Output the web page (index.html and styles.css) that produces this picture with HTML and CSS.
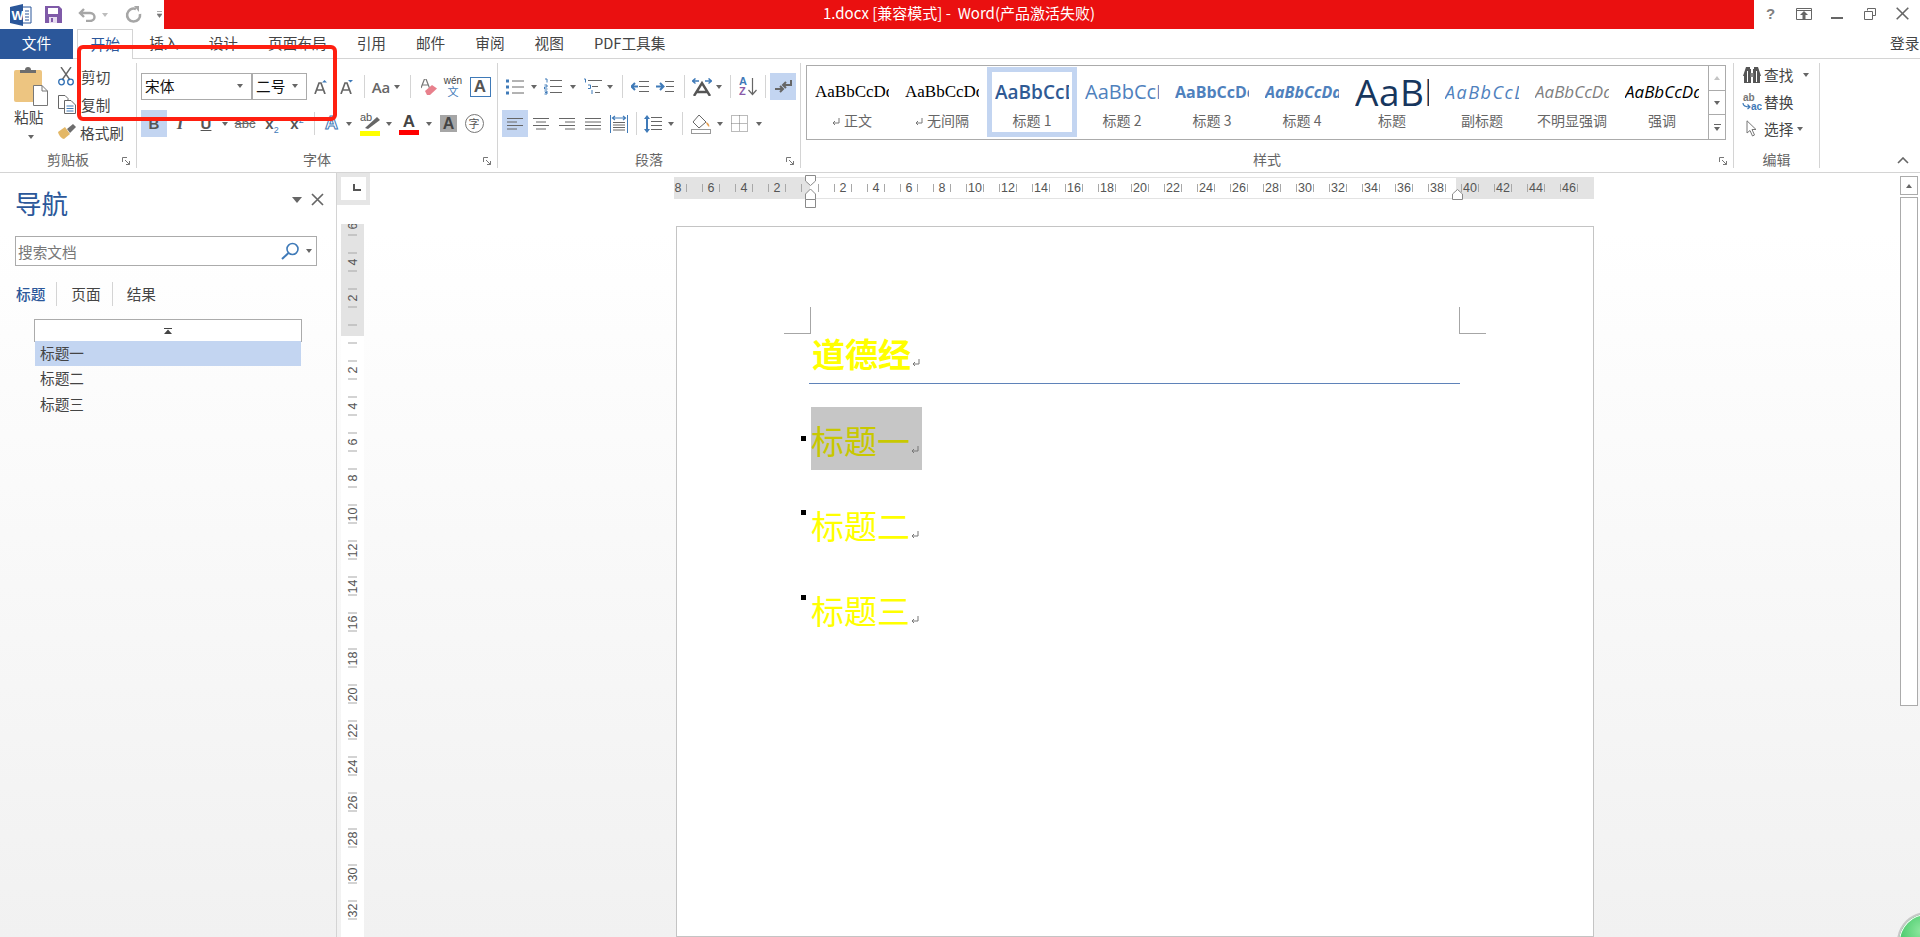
FILE: index.html
```html
<!DOCTYPE html>
<html lang="zh-CN">
<head>
  <meta charset="UTF-8">
  <title>1.docx [兼容模式] - Word</title>
  <link rel="stylesheet" href="styles.css">
</head>
<body>

  <!-- barra de título -->
  <header class="titlebar">
    <div class="quick">
      <svg class="word-logo" width="22" height="24" viewBox="0 0 22 24">
        <path d="M0 4 L13 1 V23 L0 20 Z" fill="#2b579a"/>
        <path d="M13 4 H21 V20 H13" fill="#fff" stroke="#2b579a"/>
        <path d="M15 8 H19 M15 11 H19 M15 14 H19 M15 17 H19" stroke="#2b579a"/>
        <text x="1.5" y="16.5" class="word-w">W</text>
      </svg>
      <svg class="save" width="17" height="17" viewBox="0 0 17 17">
        <path d="M0 0 H14 L17 3 V17 H0 Z" fill="#7f5aa8"/>
        <rect x="3" y="2" width="10" height="6" fill="#fff"/>
        <rect x="4" y="11" width="8" height="6" fill="#e6dcf0"/>
        <rect x="6" y="12" width="2" height="4" fill="#7f5aa8"/>
      </svg>
      <svg class="undo" width="19" height="14" viewBox="0 0 19 14">
        <path d="M2 5 H12 C18 5 18 13 12 13 H8 M6 1 L2 5 L6 9" fill="none" stroke="#a6a6a6" stroke-width="2.4"/>
      </svg>
      <i class="caret undo-caret"></i>
      <svg class="redo" width="17" height="17" viewBox="0 0 17 17">
        <path d="M11 3 A6.5 6.5 0 1 0 15 8" fill="none" stroke="#a6a6a6" stroke-width="2.6"/>
        <path d="M9 0 H14 V6 Z" fill="#a6a6a6"/>
      </svg>
      <svg class="customize" width="5" height="7" viewBox="0 0 5 7">
        <path d="M0 .5 H5 M0 3 H5 L2.5 6.5 Z" fill="#777" stroke="#777" stroke-width=".6"/>
      </svg>
    </div>
    <div class="title-red">1.docx [兼容模式] -&nbsp; Word(产品激活失败)</div>
    <div class="win-btns">
      <span class="win-btn help">?</span>
      <span class="win-btn"><svg width="16" height="12" viewBox="0 0 16 12"><path d="M.5 .5 H15.5 V11.5 H.5 Z M.5 2.5 H15.5" fill="none" stroke="#666"/><path d="M8 3 L12 7 H9.5 V11 H6.5 V7 H4 Z" fill="#666"/></svg></span>
      <span class="win-btn"><svg width="12" height="12" viewBox="0 0 12 12"><path d="M0 10 H12" stroke="#666" stroke-width="2"/></svg></span>
      <span class="win-btn"><svg width="12" height="12" viewBox="0 0 12 12"><path d="M3.5 2.5 V.5 H11.5 V7.5 H8.5 M.5 3.5 H8.5 V11.5 H.5 Z" fill="none" stroke="#666"/></svg></span>
      <span class="win-btn"><svg width="13" height="13" viewBox="0 0 13 13"><path d="M.7 .7 L12.3 12.3 M12.3 .7 L.7 12.3" stroke="#666" stroke-width="1.6"/></svg></span>
    </div>
  </header>

  <!-- pestañas -->
  <nav class="tabs">
    <div class="tab-file">文件</div>
    <div class="tab tab-active">开始</div>
    <div class="tab">插入</div>
    <div class="tab">设计</div>
    <div class="tab">页面布局</div>
    <div class="tab">引用</div>
    <div class="tab">邮件</div>
    <div class="tab">审阅</div>
    <div class="tab">视图</div>
    <div class="tab">PDF工具集</div>
    <div class="login">登录</div>
  </nav>

  <!-- cinta de opciones -->
  <section class="ribbon">

    <div class="group group-clipboard">
      <div class="clip-body">
        <div class="paste">
          <svg width="35" height="39" viewBox="0 0 35 39">
            <rect x="0" y="3" width="28" height="32" rx="2" fill="#edc581"/>
            <path d="M6 6 V3 H11 A3 3 0 0 1 17 3 H22 V6 Z" fill="#6d6d6d"/>
            <path d="M19.5 18.5 H28 L33.5 24 V38.5 H19.5 Z" fill="#fff" stroke="#777"/>
            <path d="M28 18.5 V24 H33.5" fill="none" stroke="#777"/>
          </svg>
          <span class="paste-label">粘贴</span>
          <i class="caret"></i>
        </div>
        <div class="clip-list">
          <div class="clip-row">
            <svg width="16" height="19" viewBox="0 0 16 19">
              <path d="M3 0 L12 13 M13 0 L4 13" stroke="#666" stroke-width="1.4"/>
              <circle cx="3.5" cy="15" r="2.8" fill="none" stroke="#2f6fb4" stroke-width="1.3"/>
              <circle cx="12.5" cy="15" r="2.8" fill="none" stroke="#2f6fb4" stroke-width="1.3"/>
            </svg>
            <span>剪切</span>
          </div>
          <div class="clip-row">
            <svg width="18" height="19" viewBox="0 0 18 19">
              <path d="M.5 .5 H7 L10 3.5 V13.5 H.5 Z" fill="#fff" stroke="#666"/>
              <path d="M6.5 5.5 H13 L17.5 10 V18.5 H6.5 Z" fill="#fff" stroke="#666"/>
              <path d="M8.5 11 H15.5 M8.5 13.5 H15.5 M8.5 16 H15.5" stroke="#3f7ab8"/>
            </svg>
            <span>复制</span>
          </div>
          <div class="clip-row">
            <svg width="18" height="16" viewBox="0 0 18 16">
              <path d="M0 8 L7 3 L12 10 L6 15 C4 15 1 12 0 8 Z" fill="#e3b766"/>
              <path d="M9 5 L15 0 L18 3 L12 9 Z" fill="#6d6d6d"/>
            </svg>
            <span class="clip-brush">格式刷</span>
          </div>
        </div>
      </div>
      <div class="group-label">剪贴板</div>
      <svg class="launcher" width="8" height="8" viewBox="0 0 8 8"><path d="M.5 5 V.5 H5 M3 3 L7.5 7.5 M7.5 4 V7.5 H4" fill="none" stroke="#777"/></svg>
    </div>

    <div class="group group-font">
      <div class="tool-rows">
        <div class="tool-row">
          <div class="combo combo-font"><span>宋体</span><i class="caret"></i></div>
          <div class="combo combo-size"><span>二号</span><i class="caret"></i></div>
          <div class="tool w27">
            <svg width="13" height="14" viewBox="0 0 13 14"><path d="M1 14 L5 3 H7 L11 14 M3 10 H9" fill="none" stroke="#666" stroke-width="1.7"/><path d="M8 2.5 L10.5 0 L13 2.5 Z" fill="#3f7ab8"/></svg>
          </div>
          <div class="tool w25">
            <svg width="13" height="14" viewBox="0 0 13 14"><path d="M1 14 L5 3 H7 L11 14 M3 10 H9" fill="none" stroke="#666" stroke-width="1.7"/><path d="M8 0 H13 L10.5 2.5 Z" fill="#3f7ab8"/></svg>
          </div>
          <div class="sep w9"></div>
          <div class="tool w36 tool-aa"><span class="aa">Aa</span><i class="caret"></i></div>
          <div class="sep w12"></div>
          <div class="tool w26">
            <svg width="16" height="16" viewBox="0 0 16 16"><path d="M0 9 L3.5 0 H5 L8.5 9 M1.5 6 H7" fill="none" stroke="#777" stroke-width="1.2"/><path d="M4 12 L11 6 L16 9.5 L9 16 H6 Z" fill="#e8808c"/></svg>
          </div>
          <div class="tool w22 wen"><span class="wen-top">wén</span><span class="wen-bot">文</span></div>
          <div class="tool w32"><span class="a-box">A</span></div>
        </div>
        <div class="tool-row">
          <div class="tool w26 tool-on fmt">B</div>
          <div class="tool w26 fmt fmt-i">I</div>
          <div class="tool w26 fmt fmt-u">U</div>
          <div class="tool w12"><i class="caret"></i></div>
          <div class="tool w28 fmt-abc">abc</div>
          <div class="tool w26 fmt-x"><span>x<sub>2</sub></span></div>
          <div class="tool w24 fmt-x"><span>x<sup>2</sup></span></div>
          <div class="sep w10"></div>
          <div class="tool w25"><span class="a-effect">A</span></div>
          <div class="tool w10"><i class="caret"></i></div>
          <div class="tool w31">
            <svg width="20" height="24" viewBox="0 0 20 24"><text x="0" y="9" class="ab">ab</text><path d="M5 16 L17 5 L20 8 L8 17 Z" fill="#666"/><rect x="0" y="19" width="20" height="5" fill="#ffff00"/></svg>
          </div>
          <div class="tool w8"><i class="caret"></i></div>
          <div class="tool w32 a-color">A</div>
          <div class="tool w8"><i class="caret"></i></div>
          <div class="tool w31"><span class="a-shade">A</span></div>
          <div class="tool w20"><span class="a-ring">字</span></div>
        </div>
      </div>
      <div class="group-label">字体</div>
      <svg class="launcher" width="8" height="8" viewBox="0 0 8 8"><path d="M.5 5 V.5 H5 M3 3 L7.5 7.5 M7.5 4 V7.5 H4" fill="none" stroke="#777"/></svg>
    </div>

    <div class="group group-para">
      <div class="tool-rows">
        <div class="tool-row">
          <div class="tool w26">
            <svg width="18" height="16" viewBox="0 0 18 16"><path d="M6 2 H18 M6 8 H18 M6 14 H18" stroke="#666"/><path d="M0 2 H3 M0 8 H3 M0 14 H3" stroke="#3f7ab8" stroke-width="3"/></svg>
          </div>
          <div class="tool w12"><i class="caret"></i></div>
          <div class="tool w26">
            <svg width="18" height="17" viewBox="0 0 18 17"><path d="M6 2.5 H18 M6 8.5 H18 M6 14.5 H18" stroke="#666"/><path d="M1 1 H3 V4.5 M.5 7 H3 V9 H.5 V11 H3.5 M.5 13 H3 V16 H.5 M1 14.5 H3" fill="none" stroke="#3f7ab8"/></svg>
          </div>
          <div class="tool w14"><i class="caret"></i></div>
          <div class="tool w24">
            <svg width="19" height="17" viewBox="0 0 19 17"><path d="M5 2.5 H19 M9 8.5 H15 M12 14.5 H17" stroke="#666"/><path d="M1 1 H2.5 V4.5 M5 7 H7.5 V10.5 H5 M9 12 V16" fill="none" stroke="#3f7ab8"/></svg>
          </div>
          <div class="tool w12"><i class="caret"></i></div>
          <div class="sep w12"></div>
          <div class="tool w24">
            <svg width="18" height="11" viewBox="0 0 18 11"><path d="M8 .5 H18 M8 5.5 H18 M8 10.5 H18" stroke="#666"/><path d="M7 5.5 H1 M4 2 L.5 5.5 L4 9" fill="none" stroke="#3f7ab8" stroke-width="2"/></svg>
          </div>
          <div class="tool w26">
            <svg width="18" height="11" viewBox="0 0 18 11"><path d="M9 .5 H18 M10 5.5 H18 M9 10.5 H18" stroke="#666"/><path d="M0 5.5 H7 M4 2 L7.5 5.5 L4 9" fill="none" stroke="#3f7ab8" stroke-width="2"/></svg>
          </div>
          <div class="sep w12"></div>
          <div class="tool w24">
            <svg width="20" height="18" viewBox="0 0 20 18"><path d="M2 18 L10 5 L18 18 M5 14 H15" fill="none" stroke="#555" stroke-width="2.4"/><path d="M7 3 H1 M3.5 .5 L.5 3 L3.5 5.5 M13 3 H19 M16.5 .5 L19.5 3 L16.5 5.5" fill="none" stroke="#3f7ab8" stroke-width="1.5"/></svg>
          </div>
          <div class="tool w10"><i class="caret"></i></div>
          <div class="sep w12"></div>
          <div class="tool w24">
            <svg width="18" height="19" viewBox="0 0 18 19"><text x="0" y="8" class="az az-a">A</text><text x="0" y="18" class="az az-z">Z</text><path d="M13.5 1 V17 M9.5 13 L13.5 17.5 L17.5 13" fill="none" stroke="#666" stroke-width="1.2"/></svg>
          </div>
          <div class="sep w10"></div>
          <div class="tool w26 tool-on">
            <svg width="17" height="14" viewBox="0 0 17 14"><path d="M16 0 V5 H8 M11 2 L8 5 L11 8" fill="none" stroke="#666" stroke-width="2"/><path d="M0 9 H8 M5 6 L8 9 L5 12" fill="none" stroke="#666" stroke-width="2"/></svg>
          </div>
        </div>
        <div class="tool-row">
          <div class="tool w26 tool-on">
            <svg width="16" height="12" viewBox="0 0 16 12"><path d="M0 .5 H16 M0 4 H10 M0 7.5 H16 M0 11 H10" stroke="#666"/></svg>
          </div>
          <div class="tool w26">
            <svg width="16" height="12" viewBox="0 0 16 12"><path d="M0 .5 H16 M3 4 H13 M0 7.5 H16 M3 11 H13" stroke="#666"/></svg>
          </div>
          <div class="tool w26">
            <svg width="16" height="12" viewBox="0 0 16 12"><path d="M0 .5 H16 M6 4 H16 M0 7.5 H16 M6 11 H16" stroke="#666"/></svg>
          </div>
          <div class="tool w26">
            <svg width="16" height="12" viewBox="0 0 16 12"><path d="M0 .5 H16 M0 4 H16 M0 7.5 H16 M0 11 H16" stroke="#666"/></svg>
          </div>
          <div class="tool w26">
            <svg width="18" height="18" viewBox="0 0 18 18"><path d="M.5 0 V18 M17.5 0 V18" stroke="#3f7ab8"/><path d="M3 3 H15 M5 1 L2.5 3 L5 5 M13 1 L15.5 3 L13 5" fill="none" stroke="#3f7ab8" stroke-width="1.2"/><path d="M3 7.5 H15 M3 10 H15 M3 12.5 H15 M3 15 H15" stroke="#666"/></svg>
          </div>
          <div class="sep w8"></div>
          <div class="tool w26">
            <svg width="18" height="18" viewBox="0 0 18 18"><path d="M7 2.5 H18 M7 6.5 H18 M7 10.5 H18 M7 14.5 H18" stroke="#666"/><path d="M3 3 V15" stroke="#3f7ab8" stroke-width="2"/><path d="M0 4 L3 0 L6 4 Z M0 14 H6 L3 18 Z" fill="#3f7ab8"/></svg>
          </div>
          <div class="tool w10"><i class="caret"></i></div>
          <div class="sep w12"></div>
          <div class="tool w26">
            <svg width="20" height="20" viewBox="0 0 20 20"><path d="M8 1 L15 8 L8 14 L2 8 Z" fill="#fff" stroke="#666"/><path d="M15 8 C18 9 19 12 18 13 C17 12 15 10 15 8 Z" fill="#e8a050"/><rect x=".5" y="15.5" width="19" height="4" fill="#fff" stroke="#999"/></svg>
          </div>
          <div class="tool w12"><i class="caret"></i></div>
          <div class="tool w26">
            <svg width="17" height="17" viewBox="0 0 17 17"><path d="M.5 .5 H16.5 V16.5 H.5 Z M8.5 .5 V16.5 M.5 8.5 H16.5" fill="none" stroke="#777" stroke-dasharray="1 1"/></svg>
          </div>
          <div class="tool w14"><i class="caret"></i></div>
        </div>
      </div>
      <div class="group-label">段落</div>
      <svg class="launcher" width="8" height="8" viewBox="0 0 8 8"><path d="M.5 5 V.5 H5 M3 3 L7.5 7.5 M7.5 4 V7.5 H4" fill="none" stroke="#777"/></svg>
    </div>

    <div class="group group-styles">
      <div class="gallery">
        <div class="style-item">
          <div class="preview pv-normal">AaBbCcDd</div>
          <div class="style-name"><svg class="para-mark" width="8" height="8" viewBox="0 0 8 8"><path d="M7 0 V5 H1 M3 3 L1 5 L3 7" fill="none" stroke="#777"/></svg> 正文</div>
        </div>
        <div class="style-item">
          <div class="preview pv-normal">AaBbCcDd</div>
          <div class="style-name"><svg class="para-mark" width="8" height="8" viewBox="0 0 8 8"><path d="M7 0 V5 H1 M3 3 L1 5 L3 7" fill="none" stroke="#777"/></svg> 无间隔</div>
        </div>
        <div class="style-item style-on">
          <div class="preview pv-h1">AaBbCcDd</div>
          <div class="style-name">标题 1</div>
        </div>
        <div class="style-item">
          <div class="preview pv-h2">AaBbCcDd</div>
          <div class="style-name">标题 2</div>
        </div>
        <div class="style-item">
          <div class="preview pv-h3">AaBbCcDd</div>
          <div class="style-name">标题 3</div>
        </div>
        <div class="style-item">
          <div class="preview pv-h4">AaBbCcDd</div>
          <div class="style-name">标题 4</div>
        </div>
        <div class="style-item">
          <div class="preview pv-title">AaBbCcDd</div>
          <div class="style-name">标题</div>
        </div>
        <div class="style-item">
          <div class="preview pv-sub">AaBbCcDd</div>
          <div class="style-name">副标题</div>
        </div>
        <div class="style-item">
          <div class="preview pv-subtle">AaBbCcDd</div>
          <div class="style-name">不明显强调</div>
        </div>
        <div class="style-item">
          <div class="preview pv-em">AaBbCcDd</div>
          <div class="style-name">强调</div>
        </div>
        <div class="gallery-scroll">
          <div class="gs-btn"><i class="caret caret-up caret-pale"></i></div>
          <div class="gs-btn"><i class="caret"></i></div>
          <div class="gs-btn gs-more"><i class="gs-bar"></i><i class="caret"></i></div>
        </div>
      </div>
      <div class="group-label">样式</div>
      <svg class="launcher" width="8" height="8" viewBox="0 0 8 8"><path d="M.5 5 V.5 H5 M3 3 L7.5 7.5 M7.5 4 V7.5 H4" fill="none" stroke="#777"/></svg>
    </div>

    <div class="group group-edit">
      <div class="edit-list">
        <div class="edit-row">
          <svg class="edit-icon" width="18" height="16" viewBox="0 0 18 16"><path d="M3 0 H7 V2 H8 V16 H1 V9 H0 Z M15 0 H11 V2 H10 V16 H17 V9 H18 Z" fill="#555"/><path d="M7.5 6 H10.5 V10 H7.5 Z" fill="#888"/><path d="M4.5 4 V15 M13.5 4 V15" stroke="#fff"/></svg>
          <span>查找</span><i class="caret caret-find"></i>
        </div>
        <div class="edit-row">
          <svg class="edit-icon" width="20" height="18" viewBox="0 0 20 18"><text x="1" y="8" class="ab-rep ab-top">ab</text><text x="9" y="17" class="ab-rep">ac</text><path d="M1 10 C1 13 3 14 8 14 M5.5 11.5 L8 14 L5.5 16" fill="none" stroke="#3f7ab8" stroke-width="1.2"/></svg>
          <span>替换</span>
        </div>
        <div class="edit-row">
          <svg class="edit-icon" width="20" height="17" viewBox="0 0 12 17"><path d="M1 .8 V13 L4 10.5 L6.5 16 L8.5 15 L6 9.5 H10 Z" fill="#fff" stroke="#777"/></svg>
          <span>选择</span><i class="caret"></i>
        </div>
      </div>
      <div class="group-label">编辑</div>
    </div>

    <svg class="collapse" width="12" height="7" viewBox="0 0 12 7"><path d="M1 6 L6 1 L11 6" fill="none" stroke="#666" stroke-width="1.6"/></svg>
  </section>

  <main class="workspace">

    <!-- panel de navegación -->
    <aside class="nav-pane">
      <div class="nav-head">
        <h2>导航</h2>
        <i class="nav-caret"></i>
        <svg width="13" height="13" viewBox="0 0 13 13"><path d="M1 1 L12 12 M12 1 L1 12" stroke="#666" stroke-width="1.7"/></svg>
      </div>
      <div class="nav-search">
        <span>搜索文档</span>
        <svg width="19" height="18" viewBox="0 0 19 18"><circle cx="11.5" cy="7" r="5.5" fill="none" stroke="#3f7ab8" stroke-width="1.6"/><path d="M7.5 11 L1 17" stroke="#3f7ab8" stroke-width="2"/></svg>
        <i class="caret"></i>
      </div>
      <div class="nav-tabs">
        <span class="nav-tab nav-tab-on">标题</span>
        <span class="nav-tab">页面</span>
        <span class="nav-tab">结果</span>
      </div>
      <div class="nav-tree">
        <div class="tree-top">
          <svg width="8" height="6" viewBox="0 0 8 6"><path d="M0 0 H8 V1 H0 Z M4 1.5 L8 6 H0 Z" fill="#444"/></svg>
        </div>
        <div class="tree-item tree-on">标题一</div>
        <div class="tree-item">标题二</div>
        <div class="tree-item">标题三</div>
      </div>
    </aside>

    <!-- área del documento -->
    <div class="doc">
      <div class="doc-top">
        <div class="ruler-corner"><span><i></i></span></div>
        <div class="hruler">
          <div class="hruler-track">
            <span class="hcell hcell-first"><b>8</b></span>
            <span class="hcell"><b>6</b></span>
            <span class="hcell"><b>4</b></span>
            <span class="hcell"><b>2</b></span>
            <span class="hcell"><b></b></span>
            <span class="hcell"><b>2</b></span>
            <span class="hcell"><b>4</b></span>
            <span class="hcell"><b>6</b></span>
            <span class="hcell"><b>8</b></span>
            <span class="hcell"><b>10</b></span>
            <span class="hcell"><b>12</b></span>
            <span class="hcell"><b>14</b></span>
            <span class="hcell"><b>16</b></span>
            <span class="hcell"><b>18</b></span>
            <span class="hcell"><b>20</b></span>
            <span class="hcell"><b>22</b></span>
            <span class="hcell"><b>24</b></span>
            <span class="hcell"><b>26</b></span>
            <span class="hcell"><b>28</b></span>
            <span class="hcell"><b>30</b></span>
            <span class="hcell"><b>32</b></span>
            <span class="hcell"><b>34</b></span>
            <span class="hcell"><b>36</b></span>
            <span class="hcell"><b>38</b></span>
            <span class="hcell"><b>40</b></span>
            <span class="hcell"><b>42</b></span>
            <span class="hcell"><b>44</b></span>
            <span class="hcell"><b>46</b></span>
          </div>
          <svg class="marker-left" width="13" height="33" viewBox="0 0 13 33">
            <path d="M1.5 .5 H11.5 V6 L6.5 10.5 L1.5 6 Z" fill="#fff" stroke="#8a8a8a"/>
            <path d="M6.5 14 L11.5 19 V24.5 H1.5 V19 Z" fill="#fff" stroke="#8a8a8a"/>
            <path d="M1.5 24.5 H11.5 V32.5 H1.5 Z" fill="#fff" stroke="#8a8a8a"/>
          </svg>
          <svg class="marker-right" width="13" height="11" viewBox="0 0 13 11">
            <path d="M6.5 .5 L11.5 5 V10.5 H1.5 V5 Z" fill="#fff" stroke="#8a8a8a"/>
          </svg>
        </div>
      </div>
      <div class="doc-body">
        <div class="vruler">
          <span class="vcell vcell-first"><b>6</b></span>
          <span class="vcell"><b>4</b></span>
          <span class="vcell"><b>2</b></span>
          <span class="vcell"><b></b></span>
          <span class="vcell"><b>2</b></span>
          <span class="vcell"><b>4</b></span>
          <span class="vcell"><b>6</b></span>
          <span class="vcell"><b>8</b></span>
          <span class="vcell"><b>10</b></span>
          <span class="vcell"><b>12</b></span>
          <span class="vcell"><b>14</b></span>
          <span class="vcell"><b>16</b></span>
          <span class="vcell"><b>18</b></span>
          <span class="vcell"><b>20</b></span>
          <span class="vcell"><b>22</b></span>
          <span class="vcell"><b>24</b></span>
          <span class="vcell"><b>26</b></span>
          <span class="vcell"><b>28</b></span>
          <span class="vcell"><b>30</b></span>
          <span class="vcell"><b>32</b></span>
        </div>
        <article class="page">
          <i class="crop crop-left"></i>
          <i class="crop crop-right"></i>
          <h1 class="doc-title">道德经<svg class="doc-mark" width="8" height="8" viewBox="0 0 8 8"><path d="M7 0 V5 H1 M3 3 L1 5 L3 7" fill="none" stroke="#777"/></svg></h1>
          <div class="doc-list">
            <div class="doc-item">
              <i class="bullet"></i>
              <span class="doc-text doc-selected">标题一<svg class="doc-mark" width="8" height="8" viewBox="0 0 8 8"><path d="M7 0 V5 H1 M3 3 L1 5 L3 7" fill="none" stroke="#777"/></svg></span>
            </div>
            <div class="doc-item">
              <i class="bullet"></i>
              <span class="doc-text">标题二<svg class="doc-mark" width="8" height="8" viewBox="0 0 8 8"><path d="M7 0 V5 H1 M3 3 L1 5 L3 7" fill="none" stroke="#777"/></svg></span>
            </div>
            <div class="doc-item">
              <i class="bullet"></i>
              <span class="doc-text">标题三<svg class="doc-mark" width="8" height="8" viewBox="0 0 8 8"><path d="M7 0 V5 H1 M3 3 L1 5 L3 7" fill="none" stroke="#777"/></svg></span>
            </div>
          </div>
        </article>
      </div>
    </div>

    <div class="scrollbar">
      <div class="scroll-up"><i class="caret caret-up"></i></div>
      <div class="scroll-thumb"></div>
    </div>
  </main>

  <!-- marca roja de la captura y botón flotante -->
  <div class="annotation"></div>
  <div class="float-ball"></div>

</body>
</html>
```

FILE: styles.css
```css
* {
  box-sizing: border-box;
}

html, body {
  height: 100%;
}

body {
  margin: 0;
  overflow: hidden;
  display: flex;
  flex-direction: column;
  position: relative;
  background: #fff;
  color: #444;
  font-family: "Noto Sans CJK SC", "Liberation Sans", sans-serif;
  font-size: 14.67px;
}

/* generic small triangle */
.caret {
  display: inline-block;
  width: 0;
  height: 0;
  border-left: 3.5px solid transparent;
  border-right: 3.5px solid transparent;
  border-top: 4px solid #666;
}

.caret-up {
  border-top: 0;
  border-bottom: 4px solid #666;
}

.caret-pale {
  border-bottom-color: #c4c4c4;
}

/* title bar */
.titlebar {
  display: flex;
  height: 29px;
  flex: none;
}

.quick {
  width: 164px;
  flex: none;
  display: flex;
  align-items: center;
  padding-left: 10px;
}

.word-w {
  font: bold 13px "Liberation Sans", sans-serif;
  fill: #fff;
}

.save {
  margin-left: 13px;
}

.undo {
  margin-left: 16px;
}

.undo-caret {
  margin-left: 5px;
  border-top-color: #bdbdbd;
}

.redo {
  margin-left: 17px;
}

.customize {
  margin-left: 15px;
}

.title-red {
  flex: 1;
  background: #ea1010;
  color: #fff;
  text-align: center;
  font-size: 15px;
  line-height: 25px;
}

.win-btns {
  width: 166px;
  flex: none;
  display: flex;
  align-items: center;
  padding-bottom: 2px;
}

.win-btn {
  width: 33px;
  display: flex;
  justify-content: center;
}

.help {
  font: bold 15px "Liberation Sans", sans-serif;
  color: #808080;
}

/* tabs */
.tabs {
  display: flex;
  height: 30px;
  flex: none;
  border-bottom: 1px solid #d4d4d4;
}

.tab-file {
  width: 73px;
  height: 30px;
  background: #2b579a;
  color: #fff;
  text-align: center;
  line-height: 28px;
  margin-right: 4px;
}

.tab {
  padding: 0 15px;
  line-height: 27px;
  color: #444;
}

.tab-active {
  height: 30px;
  padding: 0 12.5px;
  margin-right: 1px;
  color: #2b579a;
  background: #fff;
  border: 1px solid #d4d4d4;
  border-bottom: 0;
}

.login {
  margin-left: auto;
  width: 30px;
  white-space: nowrap;
  line-height: 27px;
}

/* ribbon */
.ribbon {
  display: flex;
  height: 114px;
  flex: none;
  border-bottom: 1px solid #d4d4d4;
  position: relative;
}

.group {
  position: relative;
  height: 105px;
  margin-top: 4px;
  border-right: 1px solid #d4d4d4;
  flex: none;
}

.group-label {
  position: absolute;
  left: 0;
  right: 0;
  bottom: -1px;
  text-align: center;
  color: #666;
  font-size: 14px;
  line-height: 20px;
}

.launcher {
  position: absolute;
  right: 6px;
  bottom: 3px;
}

.group-clipboard {
  width: 137px;
}

.group-font {
  width: 361px;
  padding-left: 4px;
}

.group-para {
  width: 303px;
  padding-left: 4px;
}

.group-styles {
  width: 933px;
  padding-left: 5px;
}

.group-edit {
  width: 86px;
}

/* clipboard */
.clip-body {
  display: flex;
  margin-top: -1px;
  padding-left: 14px;
}

.paste {
  width: 44px;
  padding-top: 5px;
  display: flex;
  flex-direction: column;
  color: #444;
}

.paste-label {
  font-size: 14.67px;
  line-height: 20px;
  margin-top: 1px;
}

.paste .caret {
  margin: 8px 0 0 14px;
}

.clip-list {
  display: flex;
  flex-direction: column;
}

.clip-row {
  display: flex;
  align-items: center;
  height: 28px;
  gap: 7px;
  color: #444;
  font-size: 14.67px;
}

.clip-row svg {
  flex: none;
}

.clip-row:nth-child(2) {
  gap: 5px;
}

.clip-row:nth-child(3) {
  gap: 4px;
}

/* tool rows */
.tool-rows {
  padding-top: 10px;
  display: flex;
  flex-direction: column;
  gap: 10px;
}

.tool-row {
  display: flex;
  height: 27px;
}

.tool {
  display: flex;
  align-items: center;
  justify-content: center;
  flex: none;
  color: #555;
}

.tool-on {
  background: #c3d5f1;
}

.sep {
  flex: none;
  position: relative;
}

.sep::after {
  content: "";
  position: absolute;
  left: 50%;
  top: 2px;
  bottom: 2px;
  width: 1px;
  background: #d4d4d4;
}

.w8 { width: 8px; }
.w9 { width: 9px; }
.w10 { width: 10px; }
.w12 { width: 12px; }
.w14 { width: 14px; }
.w20 { width: 20px; }
.w22 { width: 22px; }
.w24 { width: 24px; }
.w25 { width: 25px; }
.w26 { width: 26px; }
.w27 { width: 27px; }
.w28 { width: 28px; }
.w31 { width: 31px; }
.w32 { width: 32px; }
.w36 { width: 36px; }

.combo {
  height: 27px;
  border: 1px solid #ababab;
  display: flex;
  align-items: center;
  justify-content: space-between;
  flex: none;
  padding: 0 8px 2px 3px;
  color: #111;
  font-size: 14.67px;
}

.combo-font {
  width: 110px;
  border-right-width: 0;
}

.combo-size {
  width: 56px;
  border-left-width: 2px;
}

.tool-aa {
  gap: 4px;
}

.aa {
  font: 600 15px "Open Sans", sans-serif;
  color: #666;
}

.wen {
  flex-direction: column;
}

.wen-top {
  font: 10px/9px "Liberation Sans", sans-serif;
  color: #444;
}

.wen-bot {
  font-size: 11px;
  line-height: 12px;
  color: #3f7ab8;
}

.a-box {
  width: 21px;
  height: 20px;
  border: 1px solid #3f7ab8;
  font: bold 17px/18px "Liberation Sans", sans-serif;
  color: #555;
  text-align: center;
}

.fmt {
  font: bold 15px "Liberation Sans", sans-serif;
  color: #555;
}

.fmt-i {
  font-style: italic;
  font-family: "Liberation Serif", serif;
  font-size: 17px;
}

.fmt-u {
  text-decoration: underline;
}

.fmt-abc {
  font: 13px "Liberation Sans", sans-serif;
  text-decoration: line-through;
  color: #666;
}

.fmt-x {
  font: bold 15px/27px "Liberation Sans", sans-serif;
  color: #555;
}

.fmt-x sub,
.fmt-x sup {
  font-size: 9px;
  line-height: 0;
  font-weight: normal;
  color: #3f7ab8;
}

.a-effect {
  font: bold 18px "Liberation Sans", sans-serif;
  color: #fff;
  -webkit-text-stroke: 1px #3f7ab8;
}

.ab {
  font: 11px "Liberation Sans", sans-serif;
  fill: #555;
}

.a-color {
  flex-direction: column;
  font: bold 17px/17px "Liberation Sans", sans-serif;
  color: #444;
}

.a-color::after {
  content: "";
  width: 20px;
  height: 5px;
  background: #f00;
}

.a-shade {
  width: 17px;
  height: 17px;
  background: #a6a6a6;
  font: bold 16px/17px "Liberation Sans", sans-serif;
  color: #444;
  text-align: center;
}

.a-ring {
  width: 19px;
  height: 19px;
  border: 1px solid #777;
  border-radius: 50%;
  font-size: 11px;
  line-height: 16px;
  text-align: center;
  color: #555;
}

.az {
  font: bold 11px "Liberation Sans", sans-serif;
}

.az-a {
  fill: #3f7ab8;
}

.az-z {
  fill: #8a5aa8;
}

/* styles gallery */
.gallery {
  display: flex;
  height: 75px;
  margin-top: 2px;
  width: 920px;
  border: 1px solid #ababab;
}

.style-item {
  width: 90px;
  height: 70px;
  margin-top: 1px;
  padding: 5px 8px 0;
  flex: none;
  text-align: center;
}

.style-on {
  box-shadow: inset 0 0 0 5px #c3d5f1;
}

.preview {
  width: 74px;
  height: 40px;
  line-height: 40px;
  overflow: hidden;
  white-space: nowrap;
  text-align: left;
}

.style-name {
  margin-top: -1px;
  line-height: 18px;
  font-size: 14px;
  color: #666;
  white-space: nowrap;
}

.para-mark {
  margin-right: 1px;
}

.pv-normal {
  font: 17px/40px "Liberation Serif", serif;
  color: #000;
}

.pv-h1 {
  font: 600 19px/40px "Open Sans", sans-serif;
  color: #2f5a94;
}

.pv-h2 {
  font: 20px/40px "Open Sans", sans-serif;
  color: #4f81bd;
}

.pv-h3 {
  font: bold 16px/40px "Open Sans", sans-serif;
  color: #4f81bd;
}

.pv-h4 {
  font: italic bold 16px/40px "Open Sans", sans-serif;
  color: #4f81bd;
}

.pv-title {
  font: 37px/40px "Open Sans", sans-serif;
  letter-spacing: .5px;
  color: #17365d;
}

.pv-sub {
  font: italic 18px/40px "Open Sans", sans-serif;
  letter-spacing: 1.5px;
  color: #4f81bd;
}

.pv-subtle {
  font: italic 17px/40px "Open Sans", sans-serif;
  color: #808080;
}

.pv-em {
  font: italic 17px/40px "Open Sans", sans-serif;
  color: #000;
}

.gallery-scroll {
  width: 17px;
  margin-left: 1px;
  border-left: 1px solid #ababab;
  flex: none;
  display: flex;
  flex-direction: column;
}

.gs-btn {
  flex: 1;
  display: flex;
  flex-direction: column;
  align-items: center;
  justify-content: center;
  gap: 2px;
  border-bottom: 1px solid #ababab;
}

.gs-btn:last-child {
  border-bottom: 0;
}

.gs-bar {
  width: 7px;
  height: 1px;
  background: #666;
}

/* editing */
.edit-list {
  display: flex;
  flex-direction: column;
  margin-top: -2px;
  padding-left: 8px;
}

.edit-row {
  display: flex;
  align-items: center;
  height: 27px;
  color: #444;
  font-size: 14.67px;
}

.edit-icon {
  width: 20px;
  margin-right: 2px;
  flex: none;
}

.edit-row .caret {
  margin-left: 4px;
}

.edit-row .caret-find {
  margin-left: 10px;
}

.ab-rep {
  font: bold 10px "Liberation Sans", sans-serif;
  fill: #3f7ab8;
}

.ab-top {
  fill: #777;
}

.collapse {
  position: absolute;
  right: 11px;
  bottom: 8px;
}

/* main area */
.workspace {
  flex: 1;
  min-height: 0;
  display: flex;
  background: linear-gradient(#fff 0, #fff 60px, #f1f1f1 100%);
}

/* navigation pane */
.nav-pane {
  width: 337px;
  flex: none;
  border-right: 1px solid #d4d4d4;
  padding: 12px 0 0 15px;
}

.nav-head {
  display: flex;
  align-items: center;
  height: 34px;
  width: 309px;
}

.nav-head h2 {
  margin: 0;
  font-size: 26.5px;
  font-weight: normal;
  color: #2b579a;
  margin-right: auto;
}

.nav-caret {
  width: 0;
  height: 0;
  border-left: 5.5px solid transparent;
  border-right: 5.5px solid transparent;
  border-top: 6px solid #666;
  margin-right: 9px;
  margin-top: -5px;
}

.nav-head svg {
  margin-top: -5px;
}

.nav-search {
  display: flex;
  align-items: center;
  width: 302px;
  height: 30px;
  margin-top: 17px;
  padding: 0 4px 0 2px;
  background: #fff;
  border: 1px solid #ababab;
  color: #777;
  font-size: 14.67px;
}

.nav-search span {
  margin-right: auto;
}

.nav-search .caret {
  margin-left: 6px;
}

.nav-tabs {
  display: flex;
  height: 24px;
  margin-top: 16px;
}

.nav-tab {
  padding: 0 11px 0 14px;
  line-height: 24px;
  border-right: 1px solid #d4d4d4;
}

.nav-tab:first-child {
  padding-left: 1px;
  padding-right: 11px;
}

.nav-tab:last-child {
  border-right: 0;
}

.nav-tab-on {
  color: #2b579a;
  font-weight: 500;
}

.nav-tree {
  width: 268px;
  margin: 13px 0 0 19px;
}

.tree-top {
  height: 23px;
  background: #fff;
  border: 1px solid #ababab;
  display: flex;
  align-items: center;
  justify-content: center;
}

.tree-item {
  height: 26px;
  line-height: 24px;
  margin: 0 1px;
  padding-left: 5px;
  color: #444;
}

.tree-on {
  background: #c3d5f1;
  height: 25px;
  margin-top: -1px;
}

/* document */
.doc {
  flex: 1;
  min-width: 0;
  display: flex;
  flex-direction: column;
}

.doc-top {
  display: flex;
  height: 51px;
  flex: none;
}

.ruler-corner {
  width: 33px;
  height: 32px;
  background: #e6e6e6;
  padding: 4px;
}

.ruler-corner span {
  display: block;
  height: 23px;
  background: #fff;
  position: relative;
}

.ruler-corner i {
  position: absolute;
  left: 12px;
  top: 7px;
  width: 8px;
  height: 7px;
  border-left: 2px solid #555;
  border-bottom: 2px solid #555;
}

.hruler {
  position: relative;
  width: 920px;
  height: 22px;
  margin: 4px 0 0 304px;
}

.hruler-track {
  display: flex;
  height: 22px;
  overflow: hidden;
  border-top: 1px solid #e3e3e3;
  border-bottom: 1px solid #e3e3e3;
  background: linear-gradient(to right, #e3e3e3 136px, #fff 136px, #fff 782px, #e3e3e3 782px);
}

.hcell {
  width: 33px;
  flex: none;
  display: flex;
  align-items: center;
  justify-content: center;
}

.hcell-first {
  margin-left: -12.5px;
}

.hcell b {
  width: 17.5px;
  height: 8px;
  display: flex;
  align-items: center;
  justify-content: center;
  border-left: 1px solid #a8a8a8;
  border-right: 1px solid #a8a8a8;
  font: 12.5px "Liberation Sans", sans-serif;
  color: #555;
}

.marker-left {
  position: absolute;
  left: 130px;
  top: -2px;
}

.marker-right {
  position: absolute;
  left: 777px;
  top: 12px;
}

.doc-body {
  flex: 1;
  min-height: 0;
  display: flex;
}

.vruler {
  width: 23px;
  margin-left: 4px;
  overflow: hidden;
  flex: none;
  background: linear-gradient(#e3e3e3 112px, #fff 112px);
}

.vcell {
  height: 36px;
  display: flex;
  align-items: center;
  justify-content: center;
}

.vcell-first {
  margin-top: -16px;
}

.vcell b {
  width: 9px;
  height: 18.5px;
  display: flex;
  align-items: center;
  justify-content: center;
  border-top: 1px solid #a8a8a8;
  border-bottom: 1px solid #a8a8a8;
  font: 12.5px "Liberation Sans", sans-serif;
  color: #555;
  writing-mode: vertical-rl;
  transform: rotate(180deg);
  white-space: nowrap;
}

.page {
  position: relative;
  width: 918px;
  margin: 2px 0 0 312px;
  padding: 105px 0 0 134px;
  flex: none;
  background: #fff;
  border: 1px solid #c4c4c4;
}

.crop {
  position: absolute;
  width: 27px;
  height: 27px;
  top: 80px;
}

.crop-left {
  left: 107px;
  border-right: 1px solid #a6a6a6;
  border-bottom: 1px solid #a6a6a6;
}

.crop-right {
  left: 782px;
  border-left: 1px solid #a6a6a6;
  border-bottom: 1px solid #a6a6a6;
}

.doc-title {
  margin: 0 0 0 -2px;
  width: 651px;
  padding-left: 3px;
  height: 52px;
  line-height: 42px;
  font-size: 33px;
  font-weight: bold;
  color: #ffff00;
  border-bottom: 1px solid #5f83b9;
}

.doc-mark {
  margin-left: 1px;
}

.doc-list {
  margin-top: 23px;
}

.doc-item {
  display: flex;
  align-items: flex-start;
  height: 85px;
  margin-left: -10px;
}

.bullet {
  width: 5px;
  height: 5px;
  margin: 18px 5px 0 0;
  background: #000;
  flex: none;
}

.doc-item:first-child .bullet {
  margin-top: 29px;
}

.doc-text {
  display: block;
  height: 63px;
  width: 111px;
  line-height: 66px;
  font-size: 33px;
  white-space: nowrap;
  color: #ffff00;
}

.doc-selected {
  background: #c6c6c6;
  color: #c8c800;
}

/* scrollbar */
.scrollbar {
  width: 20px;
  flex: none;
  padding-top: 3px;
}

.scroll-up {
  width: 18px;
  height: 19px;
  background: #fff;
  border: 1px solid #ababab;
  display: flex;
  align-items: center;
  justify-content: center;
}

.scroll-thumb {
  width: 18px;
  height: 509px;
  margin-top: 2px;
  background: #fff;
  border: 1px solid #ababab;
}

/* screenshot overlays */
.annotation {
  position: absolute;
  left: 77px;
  top: 45px;
  width: 260px;
  height: 76px;
  border: 4.5px solid #ff1f10;
  border-radius: 6px;
}

.float-ball {
  position: absolute;
  left: 1897px;
  top: 912px;
  width: 60px;
  height: 60px;
  border-radius: 50%;
  border: 2px solid #c8c8c8;
  background: radial-gradient(circle at 40% 30%, #8fe8a0, #2fbf58 60%);
  box-shadow: inset 0 0 0 1px #fff;
}
```
